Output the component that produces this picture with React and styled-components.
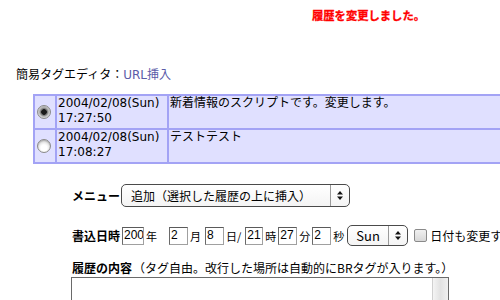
import React from "react";
import styled, { createGlobalStyle } from "styled-components";

const GlobalStyle = createGlobalStyle`
  html, body {
    margin: 0;
    padding: 0;
    overflow: hidden;
    background: #ffffff;
  }
  body {
    font-family: "DejaVu Sans", "Noto Sans CJK JP", sans-serif;
    font-size: 12px;
    color: #000000;
  }
`;

const Page = styled.div`
  width: 500px;
  height: 300px;
  overflow: hidden;
`;

const Notice = styled.div`
  padding: 7px 0 0 312px;
  height: 40px;
  color: #ff0000;
  font-weight: bold;
  font-size: 11.3px;
  font-family: "Noto Sans CJK JP", sans-serif;
  -webkit-text-stroke: 0.3px #ff0000;
`;

const EditorLine = styled.div`
  padding: 19px 0 0 16px;
  height: 15px;
  line-height: 15px;
  font-family: "Noto Sans CJK JP", sans-serif;
`;

const Link = styled.a`
  color: #5b5ba8;
  text-decoration: none;
  font-family: "DejaVu Sans", "Noto Sans CJK JP", sans-serif;
`;

const HistoryTable = styled.table`
  margin: 13px 0 0 33px;
  width: 500px;
  border-collapse: separate;
  border-spacing: 2px;
  background: #a3a3f5;
`;

const Cell = styled.td`
  background: #e0e0ff;
  padding: 0 1px;
  vertical-align: top;
  line-height: 15px;
  height: 32px;
  width: ${(p) => p.$w || "auto"};
  white-space: nowrap;
`;

const RadioCell = styled(Cell)`
  vertical-align: middle;
  padding: 0 2px;
`;

const Radio = styled.span`
  display: block;
  width: 14px;
  height: 14px;
  border-radius: 50%;
  border: 1px solid #8a8a8a;
  box-sizing: border-box;
  background: ${(p) =>
    p.$checked
      ? "radial-gradient(circle at 50% 50%, #1a1a1a 0 2.5px, #6a6a6a 3px, #c8c8c8 5px, #e8e8e8 7px)"
      : "radial-gradient(circle at 50% 65%, #ffffff 0 3px, #ececec 5px, #d2d2d2 7px)"};
  box-shadow: inset 0 1px 1px rgba(0, 0, 0, 0.15);
`;

const Form = styled.div`
  padding: 19px 0 0 72px;
  display: flex;
  flex-direction: column;
`;

const Row = styled.div`
  display: flex;
  align-items: center;
  height: ${(p) => p.$h || "24px"};
  margin-bottom: ${(p) => p.$mb || "0"};
  white-space: nowrap;
  font-family: "Noto Sans CJK JP", sans-serif;
`;

const Label = styled.b`
  font-weight: bold;
  font-family: "Noto Sans CJK JP", sans-serif;
  margin-right: ${(p) => p.$mr || "1px"};
`;

const Select = styled.div`
  display: flex;
  align-items: center;
  flex: none;
  box-sizing: border-box;
  width: ${(p) => p.$w};
  height: ${(p) => p.$h || "23px"};
  border: 1px solid #4a4a4a;
  border-radius: 5px;
  background: linear-gradient(#ffffff, #f4f4f4);
  font-family: "DejaVu Sans", "Noto Sans CJK JP", sans-serif;
  font-size: ${(p) => p.$fs || "12px"};
`;

const SelectText = styled.span`
  flex: 1;
  padding-left: ${(p) => p.$pl || "9px"};
  font-family: "Noto Sans CJK JP", "DejaVu Sans", sans-serif;
`;

const SelectArrow = styled.span`
  width: 18px;
  height: 100%;
  border-left: 1px solid #9a9a9a;
  display: flex;
  align-items: center;
  justify-content: center;
`;

const NumInput = styled.span`
  display: inline-block;
  flex: none;
  box-sizing: border-box;
  width: ${(p) => p.$w || "19px"};
  height: 18px;
  line-height: 15px;
  border: 1px solid #a0a0a0;
  border-top-color: #5a5a5a;
  border-left-color: #6a6a6a;
  background: #fff;
  padding-left: 1px;
  font-family: "Liberation Sans", sans-serif;
  font-size: 12px;
  overflow: hidden;
  white-space: nowrap;
`;

const Unit = styled.span`
  font-size: ${(p) => p.$fs || "11px"};
  margin: 0 ${(p) => p.$mr || "2px"} 0 2px;
  font-family: "Noto Sans CJK JP", sans-serif;
`;

const Check = styled.span`
  display: inline-block;
  flex: none;
  width: 13px;
  height: 13px;
  box-sizing: border-box;
  border: 1px solid #8a8a8a;
  border-radius: 2px;
  background: linear-gradient(#f0f0f0, #d8d8d8);
  margin: 0 1px 0 6px;
`;

const TextArea = styled.div`
  margin: 3px 0 0 -1px;
  width: 378px;
  height: 40px;
  box-sizing: border-box;
  border: 1px solid #6a6a6a;
  border-bottom: none;
  display: flex;
  justify-content: flex-end;
  background: #fff;
`;

const ScrollTrack = styled.div`
  width: 15px;
  height: 100%;
  background: linear-gradient(90deg, #f4f4f4, #e2e2e2 50%, #f0f0f0);
  border-left: 1px solid #d0d0d0;
`;

function Arrows() {
  return (
    <svg width="8" height="11" viewBox="0 0 8 11">
      <path d="M4 1 L7 4.5 L1 4.5 Z" fill="#111" />
      <path d="M4 10 L7 6.5 L1 6.5 Z" fill="#111" />
    </svg>
  );
}

const history = [
  { checked: true, date: "2004/02/08(Sun)", time: "17:27:50", text: "新着情報のスクリプトです。変更します。" },
  { checked: false, date: "2004/02/08(Sun)", time: "17:08:27", text: "テストテスト" },
];

export default function App() {
  return (
    <Page>
      <GlobalStyle />
      <Notice>履歴を変更しました。</Notice>
      <EditorLine>
        簡易タグエディタ：<Link href="#">URL挿入</Link>
      </EditorLine>
      <HistoryTable>
        <tbody>
          {history.map((h) => (
            <tr key={h.time}>
              <RadioCell $w="16px">
                <Radio $checked={h.checked} />
              </RadioCell>
              <Cell $w="108px">
                {h.date}
                <br />
                {h.time}
              </Cell>
              <Cell>{h.text}</Cell>
            </tr>
          ))}
        </tbody>
      </HistoryTable>
      <Form>
        <Row $h="24px" $mb="18px">
          <Label>メニュー</Label>
          <Select $w="229px">
            <SelectText>追加（選択した履歴の上に挿入）</SelectText>
            <SelectArrow>
              <Arrows />
            </SelectArrow>
          </Select>
        </Row>
        <Row $h="21px" $mb="14px">
          <Label $mr="2px">書込日時</Label>
          <NumInput $w="22px">2004</NumInput>
          <Unit $mr="12px">年</Unit>
          <NumInput>2</NumInput>
          <Unit $mr="4px">月</Unit>
          <NumInput>8</NumInput>
          <Unit $mr="4px">日/</Unit>
          <NumInput $w="18px">21</NumInput>
          <Unit $mr="2px">時</Unit>
          <NumInput>27</NumInput>
          <Unit $mr="2px">分</Unit>
          <NumInput>2</NumInput>
          <Unit $mr="3px">秒</Unit>
          <Select $w="61px" $h="21px" $fs="13px">
            <SelectText $pl="8px">Sun</SelectText>
            <SelectArrow>
              <Arrows />
            </SelectArrow>
          </Select>
          <Check />
          <Unit $fs="12px">日付も変更する</Unit>
        </Row>
        <Row $h="14px">
          <Label>履歴の内容</Label>
          <span>（タグ自由。改行した場所は自動的にBRタグが入ります。）</span>
        </Row>
        <TextArea>
          <ScrollTrack />
        </TextArea>
      </Form>
    </Page>
  );
}
